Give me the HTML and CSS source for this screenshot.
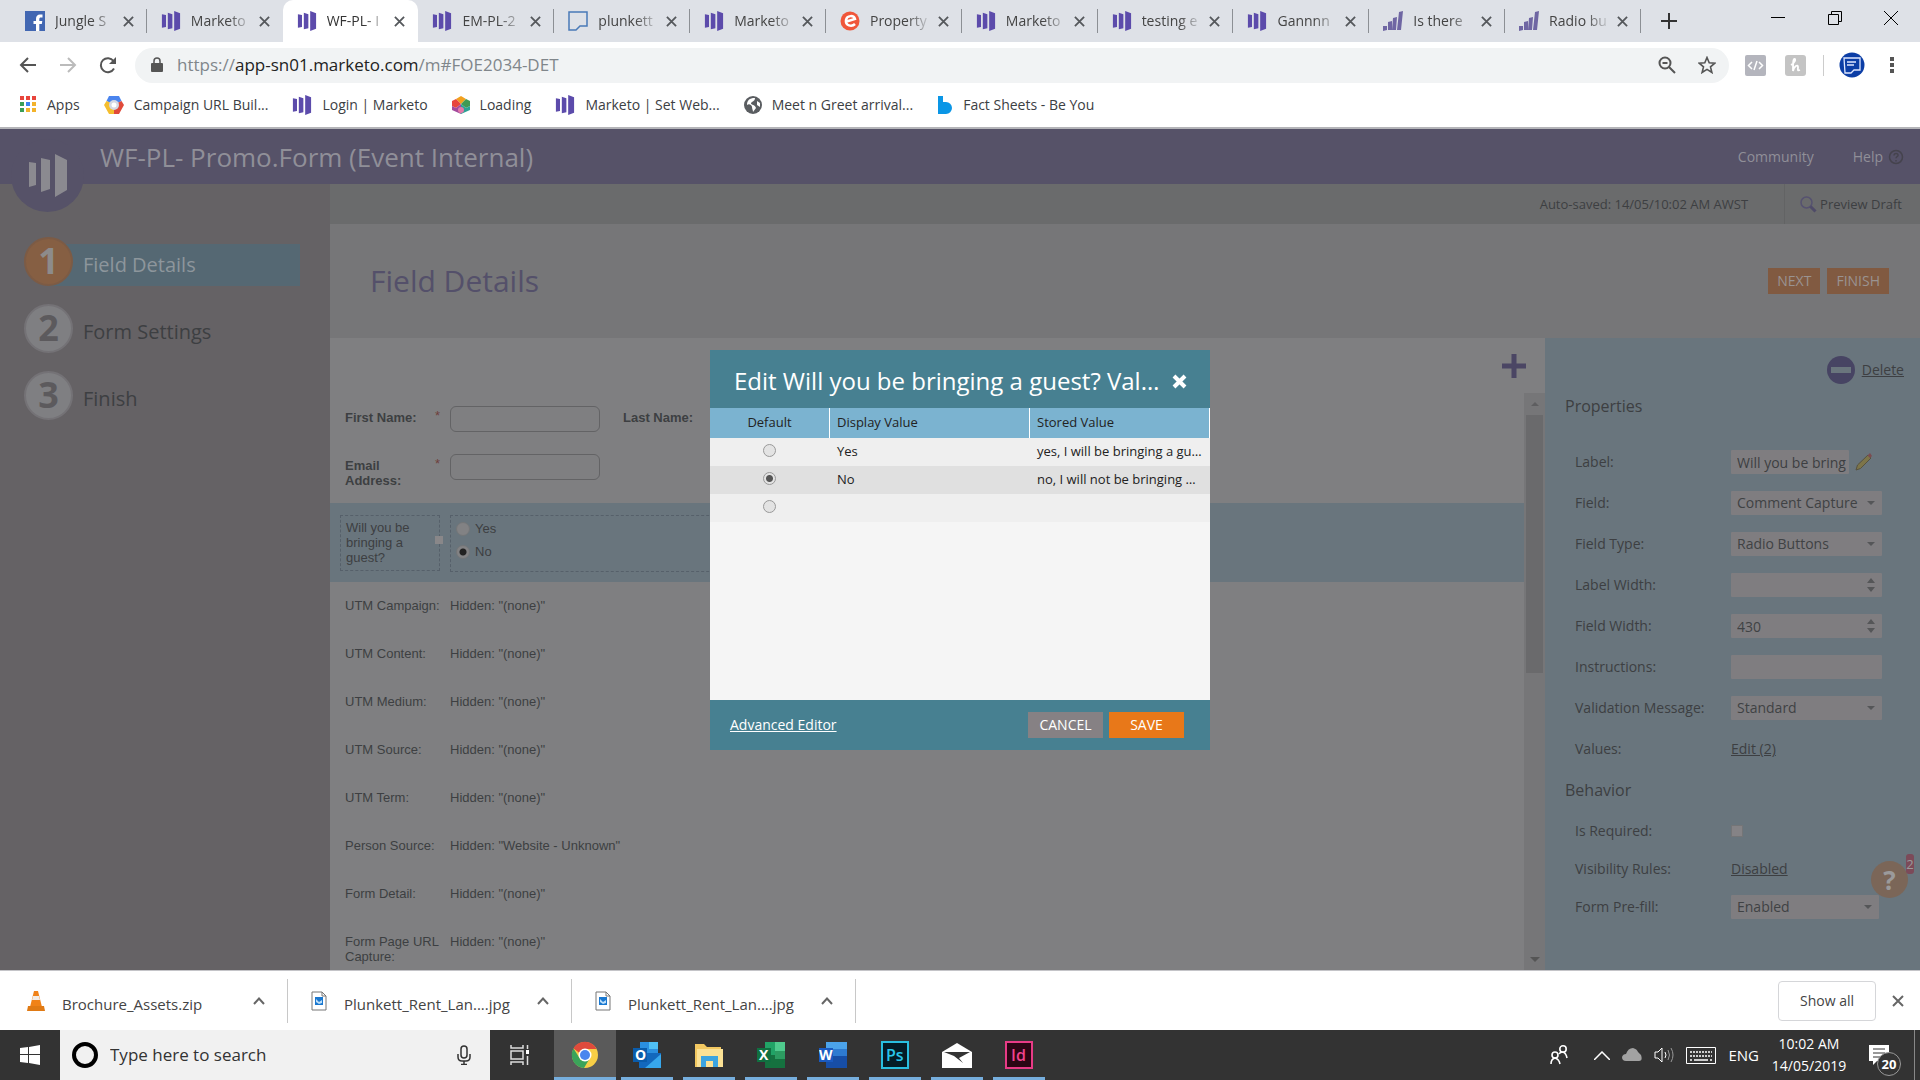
FILE: index.html
```html
<!DOCTYPE html>
<html lang="en">
<head>
<meta charset="utf-8">
<title>WF-PL- Promo.Form (Event Internal)</title>
<link rel="stylesheet" href="styles.css">
</head>
<body>
<svg class="defs">
	<symbol id="marketo" viewBox="0 0 20 22"><path fill="#5c4bab" d="M0 3.500l4.500 1v13l-4.500 1zM6.500 2l5 1.500v15.500l-5 1zM13.500 0l6.500 2.500v17L13.500 22z"/></symbol>
	<symbol id="bars" viewBox="0 0 20 20"><path fill="#6f66a3" d="M0 15h4v4l-4 1zM5 11l4-1v9H5zM10 7l4-1-1 13H9zM16 1l4-1-2 19h-4z"/></symbol>
	<symbol id="x" viewBox="0 0 12 12"><path d="M1 1l10 10M11 1L1 11" stroke="currentColor" stroke-width="2" fill="none"/></symbol>
	<symbol id="up" viewBox="0 0 12 8"><path d="M1 7l5-5.500L11 7" stroke="currentColor" stroke-width="2" fill="none"/></symbol>
	<symbol id="down" viewBox="0 0 8 4"><path d="M0 0h8L4 4z" fill="currentColor"/></symbol>
	<symbol id="spin" viewBox="0 0 8 14"><path d="M0 5h8L4 0zM0 9h8l-4 5z" fill="currentColor"/></symbol>
	<symbol id="jpg" viewBox="0 0 16 20"><path d="M1 1h10l4 4v14H1z" fill="#fff" stroke="#777"/><path d="M11 1v4h4" fill="none" stroke="#777"/><path d="M4 6h8v8H4z" fill="#1a78d0"/><path d="M5 8l3 3 3-2v3l-3 1-3-2z" fill="#bfe0fa"/></symbol>
</svg>

<!-- browser -->
<div class="tabstrip">
	<div class="tabs">
		<div class="tab"><svg class="fav"><svg viewBox="0 0 20 20"><path fill="#4267b2" d="M0 0h20v20H0z"/><path fill="#fff" d="M11 20v-7H8.500v-3H11V8c0-3 1.500-4.500 4-4.500h2.500v3H16c-1.300 0-1.700.6-1.700 1.700V10h3l-.5 3h-2.500v7z"/></svg></svg><span>Jungle S</span><button aria-label="Close tab"><svg><use href="#x"/></svg></button></div>
		<div class="tab nosep"><svg class="fav"><use href="#marketo"/></svg><span>Marketo</span><button aria-label="Close tab"><svg><use href="#x"/></svg></button></div>
		<div class="tab active"><svg class="fav"><use href="#marketo"/></svg><span>WF-PL- I</span><button aria-label="Close tab"><svg><use href="#x"/></svg></button></div>
		<div class="tab"><svg class="fav"><use href="#marketo"/></svg><span>EM-PL-2</span><button aria-label="Close tab"><svg><use href="#x"/></svg></button></div>
		<div class="tab"><svg class="fav"><svg viewBox="0 0 20 20"><path d="M1 1h18v14h-7l-4 4H1z" fill="none" stroke="#4a7ab8" stroke-width="1.500"/></svg></svg><span>plunkett</span><button aria-label="Close tab"><svg><use href="#x"/></svg></button></div>
		<div class="tab"><svg class="fav"><use href="#marketo"/></svg><span>Marketo</span><button aria-label="Close tab"><svg><use href="#x"/></svg></button></div>
		<div class="tab"><svg class="fav"><svg viewBox="0 0 20 20"><circle cx="10" cy="10" r="9.500" fill="#f0563a"/><path d="M5 11l10-3c-1-4-8-4-9 1-1 6 6 7 9 4" fill="none" stroke="#fff" stroke-width="2.500"/></svg></svg><span>Property</span><button aria-label="Close tab"><svg><use href="#x"/></svg></button></div>
		<div class="tab"><svg class="fav"><use href="#marketo"/></svg><span>Marketo</span><button aria-label="Close tab"><svg><use href="#x"/></svg></button></div>
		<div class="tab"><svg class="fav"><use href="#marketo"/></svg><span>testing e</span><button aria-label="Close tab"><svg><use href="#x"/></svg></button></div>
		<div class="tab"><svg class="fav"><use href="#marketo"/></svg><span>Gannnn</span><button aria-label="Close tab"><svg><use href="#x"/></svg></button></div>
		<div class="tab"><svg class="fav"><use href="#bars"/></svg><span>Is there</span><button aria-label="Close tab"><svg><use href="#x"/></svg></button></div>
		<div class="tab"><svg class="fav"><use href="#bars"/></svg><span>Radio bu</span><button aria-label="Close tab"><svg><use href="#x"/></svg></button></div>
	</div>
	<div class="window">
		<button class="newtab" aria-label="New tab"><svg width="16" height="16"><path d="M8 0v16M0 8h16" stroke="#333" stroke-width="2"/></svg></button>
		<button aria-label="Minimize"><svg width="14" height="14"><path d="M0 6.500h14" stroke="#000"/></svg></button>
		<button aria-label="Restore"><svg width="14" height="14"><path d="M.5 3.500h10v10H.5zM3.500 3V.5h10v10H11" fill="none" stroke="#000"/></svg></button>
		<button aria-label="Close"><svg width="14" height="14"><path d="M0 0l14 14M14 0L0 14" stroke="#000"/></svg></button>
	</div>
</div>

<div class="toolbar">
	<button aria-label="Back"><svg width="18" height="18"><path d="M17 9H2M9 2L2 9l7 7" fill="none" stroke="#555" stroke-width="2"/></svg></button>
	<button aria-label="Forward"><svg width="18" height="18"><path d="M1 9h15M9 2l7 7-7 7" fill="none" stroke="#bbb" stroke-width="2"/></svg></button>
	<button aria-label="Reload"><svg width="18" height="18"><path d="M15 12.500A7 7 0 1 1 14.500 5" fill="none" stroke="#555" stroke-width="2"/><path d="M17 1v7h-7z" fill="#555"/></svg></button>
	<div class="omnibox">
		<svg width="12" height="16"><path d="M1 6h10q1 0 1 1v7q0 1-1 1H1q-1 0-1-1V7q0-1 1-1z" fill="#555"/><path d="M3 7V4a3 3 0 0 1 6 0v3" fill="none" stroke="#555" stroke-width="1.500"/></svg>
		<span class="url">https://<b>app-sn01.marketo.com</b>/m#FOE2034-DET</span>
		<button aria-label="Zoom"><svg width="18" height="18"><circle cx="7" cy="7" r="5.500" fill="none" stroke="#555" stroke-width="2"/><path d="M11 11l6 6M4.500 7h5" stroke="#555" stroke-width="2"/></svg></button>
		<button aria-label="Bookmark this page"><svg width="18" height="18"><path d="M9 1.500l2.200 5.300 5.600.4-4.300 3.700 1.400 5.600L9 13.400l-4.900 3.100 1.400-5.600L1.200 7.200l5.600-.4z" fill="none" stroke="#555" stroke-width="1.600"/></svg></button>
	</div>
	<div class="ext">
		<button aria-label="Developer extension"><svg width="21" height="21"><rect width="21" height="21" rx="2" fill="#b4b5bd"/><path d="M7 7l-3.500 3.500L7 14M14 7l3.500 3.500L14 14M12 6l-3 9" fill="none" stroke="#fff" stroke-width="1.500"/></svg></button>
		<button aria-label="Honey extension"><svg width="21" height="21"><rect width="21" height="21" rx="3" fill="#c4c4c4"/><path d="M6 10c4-2 5-6 3.500-6S8 9 8 16c1-5 5-7 5-4s-1 4 2 3" fill="none" stroke="#fff" stroke-width="1.800"/></svg></button>
	</div>
	<button class="avatar" aria-label="Profile"><svg width="26" height="26"><circle cx="13" cy="13" r="12.500" fill="#0c3ea6"/><path d="M5 6h16v12h-6l-3 3H6z" fill="none" stroke="#dfe8ff" stroke-width="1.300"/><path d="M8 10h9M8 13h7" stroke="#dfe8ff" stroke-width="1.500"/></svg></button>
	<button aria-label="Menu"><svg width="4" height="18"><path d="M0 1h4v4H0zM0 7h4v4H0zM0 13h4v4H0z" fill="#555"/></svg></button>
</div>

<nav class="bookmarks">
	<a href="#"><svg width="17" height="17"><path fill="#e8453c" d="M0 0h4v4H0zM6 0h4v4H6zM12 0h4v4h-4z"/><path fill="#3a9e57" d="M0 6h4v4H0zM0 12h4v4H0z"/><path fill="#3b83f0" d="M6 6h4v4H6z"/><path fill="#f3b32b" d="M12 6h4v4h-4zM6 12h4v4H6zM12 12h4v4h-4z"/></svg>Apps</a>
	<a href="#"><svg width="20" height="18"><path d="M5 0h10l2.500 5-4 2h-7L2.500 5z" fill="#4a84ee"/><path d="M2.500 5L0 9l5 9h5v-5l-4-3 1-3z" fill="#f5be2e"/><path d="M17.500 5L20 9l-5 9h-5v-5l4-3-.5-3z" fill="#e04a3a"/><circle cx="10" cy="9" r="5" fill="#d4d8e4"/><circle cx="10" cy="9" r="2.500" fill="#fff"/></svg>Campaign URL Buil...</a>
	<a href="#"><svg width="20" height="20"><use href="#marketo"/></svg>Login | Marketo</a>
	<a href="#"><svg width="18" height="18"><path d="M9 0l5 3-5 5-5-5z" fill="#f2a01e"/><path d="M0 5l4-2 5 5-5 4-4-2z" fill="#e8453c"/><path d="M18 5l-4-2-5 5 5 4 4-2z" fill="#3f9a54"/><path d="M0 10l4 2 5-4v10l-9-4z" fill="#a3499c"/><path d="M18 10l-4 2-5-4v10l9-4z" fill="#2ba195"/><circle cx="9" cy="14" r="3" fill="#e47aa8"/></svg>Loading</a>
	<a href="#"><svg width="20" height="20"><use href="#marketo"/></svg>Marketo | Set Web...</a>
	<a href="#"><svg width="18" height="18"><circle cx="9" cy="9" r="9" fill="#5a5d61"/><path d="M9 2c-5 1-6 4-6 7 2-2 5 0 5 2s1 3 1 5l3-4c-1-3-3-3-5-4 0-3 4-2 4-6M13 5l3 2v4l-3-2z" fill="#fff"/></svg>Meet n Greet arrival...</a>
	<a href="#"><svg width="16" height="18"><path d="M1 0h5v6h3a6 6 0 0 1 0 12H1z" fill="#0a96e6"/></svg>Fact Sheets - Be You</a>
</nav>

<!-- marketo form editor -->
<div class="app">
	<header class="top">
		<div class="logo"><svg width="38" height="43"><path fill="#8b8a90" d="M0 8l7 1v22l-7 2zM12 4l9 2v29l-9 3zM26 0l12 6v30L26 43z"/></svg></div>
		<h1>WF-PL- Promo.Form (Event Internal)</h1>
		<a href="#">Community</a>
		<a href="#">Help <svg width="16" height="16"><circle cx="8" cy="8" r="6.500" fill="none" stroke="#45434d" stroke-width="1.500"/><path d="M6 6.500c0-3 4.500-2.500 4 0-.3 1-2 1.200-2 2.800M8 11v1.500" fill="none" stroke="#45434d" stroke-width="1.500"/></svg></a>
	</header>

	<aside class="steps">
		<a href="#" class="step current"><i>1</i><span>Field Details</span></a>
		<a href="#" class="step"><i>2</i><span>Form Settings</span></a>
		<a href="#" class="step"><i>3</i><span>Finish</span></a>
	</aside>

	<main>
		<div class="status">
			<span>Auto-saved: 14/05/10:02 AM AWST</span>
			<a href="#"><svg width="17" height="17"><circle cx="6.500" cy="6.500" r="5.500" fill="none" stroke="#565270" stroke-width="1.500"/><path d="M10.500 10.500l5 5" stroke="#4f4b68" stroke-width="3"/></svg>Preview Draft</a>
		</div>
		<div class="heading">
			<h2>Field Details</h2>
			<button>NEXT</button>
			<button>FINISH</button>
		</div>
		<div class="work">
			<section class="canvas">
				<div class="add"><button aria-label="Add field"><svg width="24" height="24"><path d="M12 0v24M0 12h24" stroke="#4b4664" stroke-width="5"/></svg></button></div>
				<div class="scroller">
					<div class="form">
						<div class="frow bold"><label for="fn">First Name:</label><em>*</em><input id="fn" type="text"><label class="second" for="ln">Last Name:</label><em>*</em><input id="ln" type="text"></div>
						<div class="frow bold"><label for="em">Email Address:</label><em>*</em><input id="em" type="text"></div>
						<div class="frow selected">
							<div class="qlabel">Will you be bringing a guest?<u></u></div>
							<div class="qfield">
								<label><input type="radio" name="guest">Yes</label>
								<label><input type="radio" name="guest" checked>No</label>
							</div>
						</div>
						<div class="frow"><span>UTM Campaign:</span><span>Hidden: "(none)"</span></div>
						<div class="frow"><span>UTM Content:</span><span>Hidden: "(none)"</span></div>
						<div class="frow"><span>UTM Medium:</span><span>Hidden: "(none)"</span></div>
						<div class="frow"><span>UTM Source:</span><span>Hidden: "(none)"</span></div>
						<div class="frow"><span>UTM Term:</span><span>Hidden: "(none)"</span></div>
						<div class="frow"><span>Person Source:</span><span>Hidden: "Website - Unknown"</span></div>
						<div class="frow"><span>Form Detail:</span><span>Hidden: "(none)"</span></div>
						<div class="frow"><span>Form Page URL Capture:</span><span>Hidden: "(none)"</span></div>
					</div>
					<div class="scrollbar">
						<svg class="flip" width="8" height="4"><use href="#down"/></svg>
						<div class="thumb"></div>
						<svg width="10" height="5"><use href="#down"/></svg>
					</div>
				</div>
			</section>

			<section class="props">
				<a href="#" class="delete"><svg width="28" height="28"><circle cx="14" cy="14" r="14" fill="#474463"/><path d="M4 11h20v6H4z" fill="#6a757d"/></svg><span>Delete</span></a>
				<h3>Properties</h3>
				<div class="prow"><label for="p1">Label:</label><input class="short" id="p1" type="text" value="Will you be bringing"><svg width="17" height="18"><path d="M1 17l1.500-5L13 2l3 3L5.500 15.500z" fill="#7d7549" stroke="#57523f"/><path d="M12.500 2.500L15 0l2 3-2 2z" fill="#7b4c50"/></svg></div>
				<div class="prow"><label for="p2">Field:</label><div class="combo"><select id="p2"><option>Comment Capture</option></select><svg width="8" height="4"><use href="#down"/></svg></div></div>
				<div class="prow"><label for="p3">Field Type:</label><div class="combo"><select id="p3"><option>Radio Buttons</option></select><svg width="8" height="4"><use href="#down"/></svg></div></div>
				<div class="prow"><label for="p4">Label Width:</label><div class="combo"><input id="p4" type="text"><svg width="8" height="14"><use href="#spin"/></svg></div></div>
				<div class="prow"><label for="p5">Field Width:</label><div class="combo"><input id="p5" type="text" value="430"><svg width="8" height="14"><use href="#spin"/></svg></div></div>
				<div class="prow"><label for="p6">Instructions:</label><div class="combo"><input id="p6" type="text"></div></div>
				<div class="prow"><label for="p7">Validation Message:</label><div class="combo"><select id="p7"><option>Standard</option></select><svg width="8" height="4"><use href="#down"/></svg></div></div>
				<div class="prow"><span>Values:</span><a href="#">Edit (2)</a></div>
				<h3 class="behavior">Behavior</h3>
				<div class="prow tight"><label for="p8">Is Required:</label><input id="p8" type="checkbox"></div>
				<div class="prow tight"><span>Visibility Rules:</span><a href="#">Disabled</a></div>
				<div class="prow tight"><label for="p9">Form Pre-fill:</label><div class="combo prefill"><select id="p9"><option>Enabled</option></select><svg width="8" height="4"><use href="#down"/></svg></div></div>
				<button class="bubble" aria-label="Guides">?<span>2</span></button>
			</section>
		</div>
	</main>

	<div class="mask">
		<div class="dialog" role="dialog" aria-labelledby="dtitle">
			<div class="dhead"><h2 id="dtitle">Edit Will you be bringing a guest? Values</h2><button aria-label="Close"><svg width="15" height="15"><path d="M2 2l11 11M13 2L2 13" stroke="#fff" stroke-width="4"/></svg></button></div>
			<div class="dbody">
				<table>
					<thead><tr><th class="c1">Default</th><th class="c2">Display Value</th><th>Stored Value</th></tr></thead>
					<tbody>
						<tr><td><input type="radio" name="def" aria-label="Yes"></td><td>Yes</td><td>yes, I will be bringing a guest</td></tr>
						<tr><td><input type="radio" name="def" aria-label="No" checked></td><td>No</td><td>no, I will not be bringing a guest</td></tr>
						<tr><td><input type="radio" name="def" aria-label="Empty"></td><td></td><td></td></tr>
					</tbody>
				</table>
			</div>
			<div class="dfoot"><a href="#">Advanced Editor</a><button>CANCEL</button><button class="save">SAVE</button></div>
		</div>
	</div>
</div>

<div class="downloads">
	<div class="file"><svg width="18" height="20"><path d="M7 0h4l4 16H3z" fill="#f08218"/><path d="M6 5h6l1 4H5z" fill="#f2ece6"/><path d="M1 15h16l1 5H0z" fill="#e07a14"/></svg><span>Brochure_Assets.zip</span><button aria-label="More"><svg width="12" height="8"><use href="#up"/></svg></button></div>
	<div class="file"><svg width="16" height="20"><use href="#jpg"/></svg><span>Plunkett_Rent_Lan....jpg</span><button aria-label="More"><svg width="12" height="8"><use href="#up"/></svg></button></div>
	<div class="file"><svg width="16" height="20"><use href="#jpg"/></svg><span>Plunkett_Rent_Lan....jpg</span><button aria-label="More"><svg width="12" height="8"><use href="#up"/></svg></button></div>
	<button class="showall">Show all</button>
	<button class="closebar" aria-label="Close downloads"><svg width="12" height="12"><use href="#x"/></svg></button>
</div>

<!-- windows taskbar -->
<div class="taskbar">
	<button class="start" aria-label="Start"><svg width="20" height="20"><path fill="#fff" d="M0 3l8-1v7H0zM9 2l11-2v9H9zM0 10h8v8l-8-1zM9 10h11v10L9 18z"/></svg></button>
	<label class="search">
		<svg width="28" height="28"><circle cx="14" cy="14" r="11" fill="none" stroke="#000" stroke-width="4"/></svg>
		<input type="text" placeholder="Type here to search">
		<svg width="14" height="20"><rect x="4" y="1" width="6" height="12" rx="3" fill="none" stroke="#333" stroke-width="1.500"/><path d="M1 9v3q0 4 4 4h4q4 0 4-4V9M7 16v4M4 19.500h6" fill="none" stroke="#333" stroke-width="1.500"/></svg>
	</label>
	<button class="view" aria-label="Task view"><svg width="20" height="20"><path d="M1 0v3h12V0M1 20v-3h12v3M1 6h12v8H1zM17.500 0v4M17.500 11v9" fill="none" stroke="#ddd" stroke-width="1.500"/><path d="M16 5h3v4h-3z" fill="#fff"/></svg></button>
	<button class="task on" aria-label="Chrome"><svg width="28" height="28"><circle cx="14" cy="14" r="13" fill="#f7ce46"/><path d="M2.500 7.500A13 13 0 0 1 25.500 8H14a6 6 0 0 0-5.500 4z" fill="#df4b3c"/><path d="M2.500 7.500A13 13 0 0 0 13 27l6-10-5 3a6 6 0 0 1-5.500-3z" fill="#3ba35a"/><circle cx="14" cy="14" r="6.500" fill="#fff"/><circle cx="14" cy="14" r="5" fill="#4a86ee"/></svg></button>
	<button class="task" aria-label="Outlook"><svg width="28" height="28"><path d="M7 1h18v13H7z" fill="#2a8fe0"/><path d="M16 1h9v7h-9z" fill="#4fc0f5"/><path d="M6 12h22v15H6z" fill="#1268bd"/><path d="M28 13v14H12z" fill="#37a7ec"/><path d="M0 7h14v14H0z" fill="#0a5cab"/><text x="2" y="19" class="ico">O</text></svg></button>
	<button class="task" aria-label="File Explorer"><svg width="28" height="28"><path d="M0 3h9l3 3h14v20H0z" fill="#f2c861"/><path d="M2 8h26v18H2z" fill="#fbe194"/><path d="M6 15h17v11h-5v-6h-7v6H6z" fill="#3ba4e0"/></svg></button>
	<button class="task" aria-label="Excel"><svg width="28" height="28"><path d="M8 1h20v26H8z" fill="#21a366"/><path d="M18 1h10v9H18z" fill="#4fca8d"/><path d="M8 14h20v13H8z" fill="#15713f"/><path d="M18 10h10v8H18z" fill="#2c9c61"/><path d="M0 7h14v14H0z" fill="#107040"/><text x="2" y="19" class="ico">X</text></svg></button>
	<button class="task" aria-label="Word"><svg width="28" height="28"><path d="M7 1h21v8H7z" fill="#4ba3ea"/><path d="M7 8h21v7H7z" fill="#2e7bd1"/><path d="M7 15h21v12H7z" fill="#174ea6"/><path d="M0 7h14v14H0z" fill="#1a5ac0"/><text x="0" y="19" class="ico">W</text></svg></button>
	<button class="task" aria-label="Photoshop"><svg width="28" height="28"><path d="M1 1h26v26H1z" fill="#041c26" stroke="#29bfe0" stroke-width="2"/><text x="5" y="20" class="ps">Ps</text></svg></button>
	<button class="task" aria-label="Mail"><svg width="30" height="26"><path d="M0 10L15 1l15 9v16H0z" fill="#fff"/><path d="M2 10h26L17 16l4 5-9-7z" fill="#333"/></svg></button>
	<button class="task" aria-label="InDesign"><svg width="28" height="28"><path d="M1 1h26v26H1z" fill="#2b0614" stroke="#e83b86" stroke-width="2"/><text x="6" y="20" class="id">Id</text></svg></button>
	<div class="tray">
		<svg width="18" height="20"><path d="M1 19q0-5 4-6 4 1 5 6M9 9q1-2 4-2 3 1 4 6" fill="none" stroke="#fff" stroke-width="1.600"/><circle cx="5" cy="10" r="3" fill="none" stroke="#fff" stroke-width="1.600"/><circle cx="13" cy="4" r="3.200" fill="none" stroke="#fff" stroke-width="1.600"/></svg>
		<svg class="chev" width="16" height="9"><path d="M0 9l8-8 8 8" fill="none" stroke="#fff" stroke-width="1.500"/></svg>
		<svg width="20" height="14"><path d="M4 13q-4 0-4-4 1-3 4-3 2-6 7-6 4 1 5 4l3 3q2 6-2 6z" fill="#a2a2a2"/></svg>
		<svg width="20" height="16"><path d="M1 5h3l4-4v14l-4-4H1z" fill="none" stroke="#fff"/><path d="M11 5q2 3 0 6" fill="none" stroke="#fff"/><path d="M14 3q3 5 0 10M17 1q4 7 0 14" fill="none" stroke="#999"/></svg>
		<svg width="30" height="17"><path d="M.5.5h29v16H.5z" fill="none" stroke="#fff"/><path d="M4 5h22M4 9h22" stroke="#fff" stroke-width="1.500" stroke-dasharray="2 1"/><path d="M4 13h2M8 13h14M24 13h2" stroke="#fff" stroke-width="1.500"/></svg>
		<span>ENG</span>
		<div class="clock">10:02 AM<br>14/05/2019</div>
		<div class="notes"><svg width="21" height="20"><path d="M0 0h20v16H8l-4 4v-4H0z" fill="#fff"/><path d="M4 4h12M4 8h12M4 12h8" stroke="#333"/></svg><b>20</b></div>
	</div>
	<div class="desktop"></div>
</div>
</body>
</html>
```
FILE: styles.css
```css
* {box-sizing:border-box;margin:0;padding:0;}
body {height:100vh;display:flex;flex-direction:column;overflow:hidden;background:#fff;font:15px/20px "Open Sans","Noto Sans",sans-serif;color:#444;}
button {border:0;background:none;font:inherit;color:inherit;display:flex;align-items:center;justify-content:center;}
input,select {font:inherit;color:inherit;border:0;outline:0;}
a {color:inherit;text-decoration:none;}
svg {flex:none;}
.defs {position:absolute;width:0;height:0;}

/* tabs */
.tabstrip {display:flex;height:42px;background:#dee1e7;}
.tabs {flex:1;min-width:0;display:flex;padding-left:11px;}
.tab {flex:1 1 0;min-width:0;display:flex;align-items:center;padding:0 13px 0 14px;font-size:14px;position:relative;}
.tab::after {content:"";position:absolute;right:0;top:9px;height:24px;border-right:1px solid #8c8f94;}
.tab.active {background:#fff;border-radius:10px 10px 0 0;color:#333;}
.tab.active::after,.tab.nosep::after {display:none;}
.fav {width:20px;height:20px;margin-right:10px;}
.tab span {flex:1;min-width:0;overflow:hidden;white-space:nowrap;-webkit-mask-image:linear-gradient(90deg,#000 60%,transparent);mask-image:linear-gradient(90deg,#000 60%,transparent);}
.tab button {margin-left:6px;color:#55585c;}
.tab button svg {width:11px;height:11px;}
.window {flex:none;display:flex;width:279px;justify-content:space-between;align-items:center;padding:0 22px 6px 20px;}
.window .newtab {padding-top:6px;margin-right:52px;}

/* toolbar */
.toolbar {display:flex;align-items:center;height:46px;padding:0 26px 0 19px;gap:22px;}
.omnibox {flex:1;display:flex;align-items:center;height:35px;border-radius:18px;background:#f1f3f4;padding:0 13px 0 16px;gap:22px;margin-left:-4px;}
.url {flex:1;font-size:17px;color:#80868b;margin-left:-8px;}
.url b {font-weight:normal;color:#222;}
.ext {display:flex;gap:19px;padding-right:17px;border-right:1px solid #ccc;margin-left:-6px;}
.avatar {margin:0 3px 0 -7px;}
.bookmarks {display:flex;align-items:center;height:39px;padding:0 20px 6px;gap:24px;font-size:14px;color:#3c4043;}
.bookmarks a {display:flex;align-items:center;gap:10px;white-space:nowrap;}

/* editor */
.app {flex:1;min-height:0;position:relative;display:grid;grid-template:55px minmax(0,1fr) / 330px minmax(0,1fr);border-top:2px solid #b4b4b8;background:#7f7f81;color:#3d3f42;}
.top {grid-column:1 / 3;display:flex;align-items:center;padding:0 16px 0 11px;background:#565268;color:#908f98;font-size:14px;position:relative;z-index:1;}
.top h1 {flex:1;font-size:26px;line-height:32px;font-weight:normal;margin-left:16px;}
.top a {display:flex;align-items:center;gap:5px;margin-left:39px;}
.logo {width:73px;height:73px;border-radius:50%;background:#565268;display:flex;align-items:center;justify-content:center;align-self:flex-start;margin-top:10px;}
.steps {background:#656265;padding:53px 30px 0 24px;}
.step {display:flex;align-items:flex-end;height:49px;margin-bottom:18px;font-size:20px;}
.step i {width:49px;height:49px;position:relative;border-radius:50%;background:#7f7f82;border:2px solid #747276;color:#5c5a5d;font:bold 36px/44px "Open Sans",sans-serif;text-align:center;}
.step span {flex:1;padding:7px 0 7px 34px;margin-left:-24px;line-height:28px;}
.step.current i {background:#865f43;border-color:#7c5b45;color:#8d8b8b;}
.step.current span {background:#556873;color:#8d969c;}
main {display:flex;flex-direction:column;min-height:0;}
.status {display:flex;height:40px;background:#6a6b6c;font-size:13px;line-height:40px;}
.status span {margin-left:auto;padding-right:36px;border-right:1px solid #626364;}
.status a {display:flex;align-items:center;gap:3px;padding:0 18px 0 15px;}
.heading {display:flex;align-items:center;height:114px;padding:0 31px 0 40px;gap:7px;background:#767678;}
.heading h2 {flex:1;font-size:30px;line-height:36px;font-weight:normal;color:#54506a;}
.heading button {background:#815a41;color:#9a9391;height:26px;padding:0 9px;font-size:14px;}
.work {flex:1;min-height:0;display:flex;}

.canvas {flex:1;min-width:0;display:flex;flex-direction:column;font:13px/15px "Liberation Sans",Arial,sans-serif;}
.add {display:flex;justify-content:flex-end;height:55px;padding:16px 19px 0 0;align-items:flex-start;}
.scroller {flex:1;min-height:0;display:flex;}
.form {flex:1;overflow:hidden;padding-top:7px;}
.frow {display:flex;height:48px;padding:10px 0 0 15px;}
.frow > label {width:90px;}
.frow > span:first-child {width:105px;padding-right:8px;}
.frow.bold {font-weight:bold;padding-top:6px;}
.frow.bold label {padding-top:4px;}
.frow em {width:15px;color:#6e403c;font-weight:normal;font-style:normal;padding-top:2px;}
.frow input[type=text] {width:150px;height:26px;border:1px solid #636365;border-radius:6px;background:#7f7f81;}
.frow .second {margin-left:23px;width:120px;}
.frow.selected {height:79px;background:#69757d;padding:12px 0 0 10px;margin:7px 0 6px;}
.qlabel {width:100px;height:56px;border:1px dashed #56606a;padding:4px 5px;position:relative;}
.qlabel u {position:absolute;right:-4px;top:20px;width:8px;height:8px;background:#898789;}
.qfield {width:430px;height:57px;border:1px dashed #56606a;margin-left:10px;padding:5px 0 0 5px;}
.qfield label {display:flex;align-items:center;gap:5px;height:15px;margin-bottom:8px;}
input[type=radio] {appearance:none;width:13px;height:13px;border:1px solid #999;border-radius:50%;background:#e3e3e3;}
input[type=radio]:checked {background:radial-gradient(#555 0 3px,#e3e3e3 4px);}
.qfield input[type=radio] {width:14px;height:14px;border-color:#747678;background:#828284;}
.qfield input[type=radio]:checked {background:radial-gradient(#222 0 3px,#828284 4px);}
.scrollbar {width:21px;background:#767678;display:flex;flex-direction:column;align-items:center;padding:9px 0 8px;color:#555;}
.scrollbar .flip {transform:rotate(180deg);color:#5e5e60;}
.thumb {width:17px;height:46%;margin:9px 0 auto;background:#6a6a6c;}

.props {width:375px;background:#69757d;padding:14px 16px 0 20px;position:relative;font-size:14px;}
.delete {display:flex;justify-content:flex-end;align-items:center;gap:7px;height:35px;}
.delete span,.prow a {text-decoration:underline;}
.props h3 {font-size:16px;line-height:24px;font-weight:normal;margin:7px 0 32px;}
.prow {display:flex;align-items:center;height:24px;margin-bottom:17px;padding-left:10px;}
.prow > :first-child {width:156px;}
.prow > input.short {width:118px;height:24px;padding:0 3px 0 6px;background:#7f7d80;border-radius:1px;margin-right:6px;}
.combo {display:flex;align-items:center;width:151px;height:24px;padding:0 7px 0 6px;background:#7f7d80;border-radius:1px;color:#404244;}
.combo.prefill {width:148px;}
.combo svg {color:#555658;}
.combo input,.combo select {flex:1;min-width:0;height:24px;background:none;appearance:none;}
.props .behavior {margin:0 0 17px;}
.prow.tight {margin-bottom:14px;}
.prow input[type=checkbox] {appearance:none;width:12px;height:12px;background:#858386;border:1px solid #747577;}
.bubble {position:absolute;right:12px;bottom:72px;width:37px;height:37px;border-radius:50%;background:#7b6658;color:#9b9a9b;font-size:26px;font-weight:bold;}
.bubble span {position:absolute;right:-6px;top:-7px;width:8px;border-radius:3px;background:#7c4a59;font:13px/20px "Open Sans",sans-serif;}

/* dialog */
.mask {position:absolute;inset:0;display:flex;align-items:center;justify-content:center;z-index:2;}
.dialog {width:500px;height:400px;display:flex;flex-direction:column;background:#f5f5f5;font-size:13px;color:#222;}
.dhead {display:flex;align-items:center;height:58px;padding:5px 23px 0 24px;background:#478091;color:#fff;}
.dhead h2 {flex:1;font-size:24px;line-height:32px;font-weight:normal;white-space:nowrap;overflow:hidden;text-overflow:ellipsis;margin-right:11px;}
.dbody {flex:1;}
table {width:100%;table-layout:fixed;border-spacing:0;}
.c1 {width:120px;}
.c2 {width:200px;}
th {height:30px;background:#7bb3d0;border-right:1px solid #fff;font-weight:normal;text-align:left;padding:0 7px 2px;}
td {height:28px;padding:0 8px 2px 7px;white-space:nowrap;overflow:hidden;text-overflow:ellipsis;}
th:first-child,td:first-child {text-align:center;}
td:first-child {padding-bottom:5px;}
td input {vertical-align:middle;}
tbody tr {background:#efefef;}
tbody tr:nth-child(2) {background:#e0e0e0;}
.dfoot {display:flex;align-items:center;height:50px;padding:0 26px 0 20px;gap:6px;background:#478091;color:#fff;font-size:14px;}
.dfoot a {margin-right:auto;text-decoration:underline;}
.dfoot button {width:75px;height:26px;background:#868184;}
.dfoot .save {background:#e87819;}

/* downloads */
.downloads {display:flex;align-items:center;height:60px;padding:0 16px 0 4px;border-top:1px solid #c4c4c8;}
.file {display:flex;align-items:center;width:284px;height:44px;padding:0 22px 0 23px;border-right:1px solid #c8c8c8;}
.file span {flex:1;margin-left:17px;padding-top:6px;}
.file button {color:#666;}
.showall {margin-left:auto;width:98px;height:40px;border:1px solid #d5d6d9;border-radius:4px;font-size:14px;}
.closebar {margin-left:16px;color:#666;}

/* taskbar */
.taskbar {display:flex;height:50px;background:#333;color:#fff;}
.start {width:60px;}
.search {width:430px;background:#f1f1f1;display:flex;align-items:center;padding:0 19px 0 11px;gap:11px;}
.search input {flex:1;min-width:0;background:none;font-size:17px;}
.search input::placeholder {color:#333;}
.view {width:60px;margin-right:4px;}
.task {width:52px;margin:0 5px;border-bottom:3px solid #76aedd;padding-top:3px;}
.task.on {width:62px;margin:0;background:#5a5a5a;}
.ico {fill:#fff;font-size:14px;font-weight:bold;}
.ps,.id {font-size:16px;font-weight:600;fill:#29c5ea;}
.id {fill:#f0428c;}
.tray {margin-left:auto;display:flex;align-items:center;gap:12px;padding-right:24px;}
.tray .chev {margin-left:14px;}
.clock {text-align:center;font-size:14px;line-height:22px;width:76px;}
.notes {position:relative;height:20px;margin-left:10px;}
.notes b {position:absolute;left:8px;top:7px;width:24px;height:24px;border:1px solid #999;border-radius:50%;background:#333;font-size:13px;line-height:22px;text-align:center;}
.desktop {width:6px;border-left:1px solid #888;}
```
